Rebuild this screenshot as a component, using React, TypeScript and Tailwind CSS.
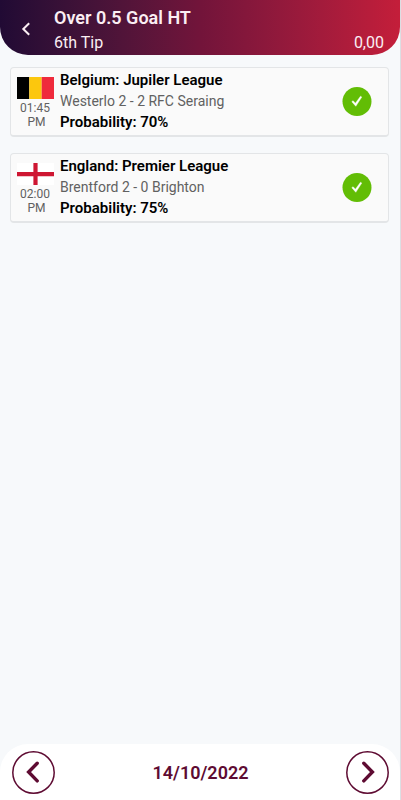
import React from 'react';

interface Tip {
  id: number;
  flag: 'belgium' | 'england';
  time: string;
  league: string;
  match: string;
  probability: string;
}

const tips: Tip[] = [
  {
    id: 1,
    flag: 'belgium',
    time: '01:45',
    league: 'Belgium: Jupiler League',
    match: 'Westerlo 2 - 2 RFC Seraing',
    probability: '70%'
  },
  {
    id: 2,
    flag: 'england',
    time: '02:00',
    league: 'England: Premier League',
    match: 'Brentford 2 - 0 Brighton',
    probability: '75%'
  }
];

function Flag({ name }: { name: Tip['flag'] }) {
  if (name === 'belgium') {
    return (
      <svg viewBox="0 0 37 22" className="w-[37px] h-[22px]" role="img" aria-label="Belgium">
        <rect width="12.3" height="22" fill="#000000" />
        <rect x="12.3" width="12.4" height="22" fill="#fcc70d" />
        <rect x="24.7" width="12.3" height="22" fill="#ef2b3c" />
      </svg>
    );
  }
  return (
    <svg viewBox="0 0 37 22" className="w-[37px] h-[22px]" role="img" aria-label="England">
      <rect width="37" height="22" fill="#ffffff" />
      <path d="M16.4 0h4.2v22h-4.2zM0 9h37v4.2H0z" fill="#ce1632" />
    </svg>
  );
}

function TipCard({ tip }: { tip: Tip }) {
  return (
    <li className="flex items-center rounded-sm border border-b-2 border-[#e3e5e7] bg-[#fafafa] pl-[5px] pr-4 h-[70px]">
      <div className="flex flex-col items-center w-[38px] pt-[3px] shrink-0">
        <Flag name={tip.flag} />
        <p className="text-[12px] leading-[14px] pt-[2px] text-center whitespace-pre text-[#616161]">
          {tip.time}{'\n PM'}
        </p>
      </div>
      <div className="flex-1 min-w-0 pl-[6px] text-[15px] leading-[21px]">
        <h2 className="font-semibold text-black truncate">{tip.league}</h2>
        <p className="text-[14px] text-[#616161] truncate">{tip.match}</p>
        <p className="font-semibold text-black truncate">Probability: {tip.probability}</p>
      </div>
      <svg viewBox="0 0 30 30" className="w-[30px] h-[30px] shrink-0" role="img" aria-label="Won">
        <circle cx="15" cy="14.5" r="14.5" fill="#62bd05" />
        <path d="M9.8 14.7l1.3-1 2.3 2.5 5.1-7 1.3.9-6 9.2z" fill="#ffffff" stroke="#ffffff" strokeWidth="0.4" strokeLinejoin="round" />
      </svg>
    </li>
  );
}

export default function App() {
  return (
    <div className="flex flex-col min-h-screen border-r border-[#dcdfe3] bg-[#f7f9fb] font-[Roboto,sans-serif]">
      <header className="flex items-center rounded-b-[28px] bg-linear-to-r from-[#210a34] via-[#72143a] to-[#c41e3a] px-4 pt-[5px] text-[#fbeef3]">
        <button type="button" aria-label="Back" className="flex items-center justify-center w-5 h-5 mr-[18px]">
          <svg viewBox="0 0 20 20" className="w-5 h-5" fill="none" stroke="currentColor" strokeWidth="2">
            <path d="M13.2 3.3L7.3 9l5.9 5.7" />
          </svg>
        </button>
        <div className="flex-1">
          <h1 className="text-[18px] leading-[25px] font-semibold">Over 0.5 Goal HT</h1>
          <div className="flex justify-between text-[16px] leading-[25px]">
            <span>6th Tip</span>
            <span>0,00</span>
          </div>
        </div>
      </header>

      <main className="flex-1 pl-[10px] pr-[11px] pt-3">
        <ul className="flex flex-col gap-4">
          {tips.map((tip) => (
            <TipCard key={tip.id} tip={tip} />
          ))}
        </ul>
      </main>

      <nav className="flex items-center justify-between rounded-t-[28px] bg-white pl-3 pr-[11px] pt-[7px] pb-[6px] text-[#5e0b32]">
        <button type="button" aria-label="Previous day">
          <svg viewBox="0 0 43 43" className="w-[43px] h-[43px]" fill="none" stroke="currentColor">
            <circle cx="21.5" cy="21.5" r="20.7" strokeWidth="1.5" />
            <path d="M25.2 12.2L16.6 21l8.6 8.9" strokeWidth="3.4" strokeLinecap="round" />
          </svg>
        </button>
        <time dateTime="2022-10-14" className="text-[18px] leading-[24px] font-semibold">14/10/2022</time>
        <button type="button" aria-label="Next day">
          <svg viewBox="0 0 43 43" className="w-[43px] h-[43px]" fill="none" stroke="currentColor">
            <circle cx="21.5" cy="21.5" r="20.7" strokeWidth="1.5" />
            <path d="M17.8 12.2l8.6 8.8-8.6 8.9" strokeWidth="3.4" strokeLinecap="round" />
          </svg>
        </button>
      </nav>
    </div>
  );
}
